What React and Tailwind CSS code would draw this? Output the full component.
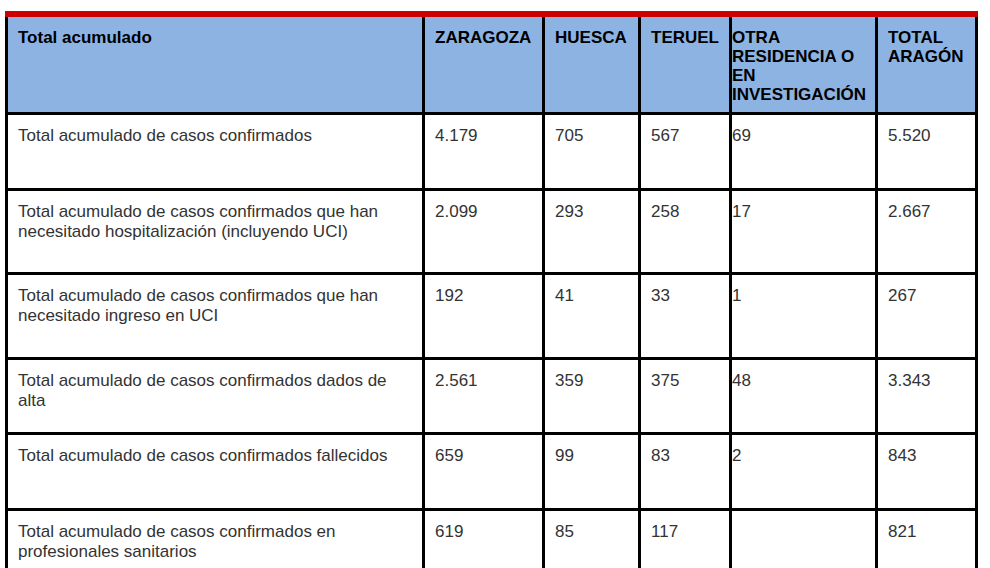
import React from 'react';

const headers = ['Total acumulado', 'ZARAGOZA', 'HUESCA', 'TERUEL', 'OTRA RESIDENCIA O EN INVESTIGACIÓN', 'TOTAL ARAGÓN'];

const rows = [
  ['Total acumulado de casos confirmados', '4.179', '705', '567', '69', '5.520'],
  ['Total acumulado de casos confirmados que han necesitado hospitalización (incluyendo UCI)', '2.099', '293', '258', '17', '2.667'],
  ['Total acumulado de casos confirmados que han necesitado ingreso en UCI', '192', '41', '33', '1', '267'],
  ['Total acumulado de casos confirmados dados de alta', '2.561', '359', '375', '48', '3.343'],
  ['Total acumulado de casos confirmados fallecidos', '659', '99', '83', '2', '843'],
  ['Total acumulado de casos confirmados en profesionales sanitarios', '619', '85', '117', '', '821'],
];

// column 5 has no left padding in the original
const pad = (i) => (i === 4 ? 'pl-0 pr-[10px]' : 'px-[10px]');

export default function App() {
  return (
    <div className="min-h-screen bg-white pt-[11px] pl-[5px]" style={{ fontFamily: '"Liberation Sans", Arial, sans-serif' }}>
      <div className="w-[973px]">
        <div className="h-[6px] bg-[#cc0000]" />
        <div className="grid grid-cols-[414px_117px_93px_88px_143px_97px] grid-rows-[95px_73px_81px_82px_72px_73px_73px] gap-[3px] bg-black px-[3px] pb-[3px]">
          {headers.map((h, i) => (
            <div key={h} className={`bg-[#8db3e3] pt-[11px] ${pad(i)} text-[17px] leading-[19px] font-bold text-black`}>
              {h}
            </div>
          ))}
          {rows.map((r) =>
            r.map((c, i) => (
              <div key={r[0] + i} className={`bg-white pt-[11px] ${pad(i)} text-[17px] leading-[20px] text-[#333]`}>
                {c}
              </div>
            ))
          )}
        </div>
      </div>
    </div>
  );
}
